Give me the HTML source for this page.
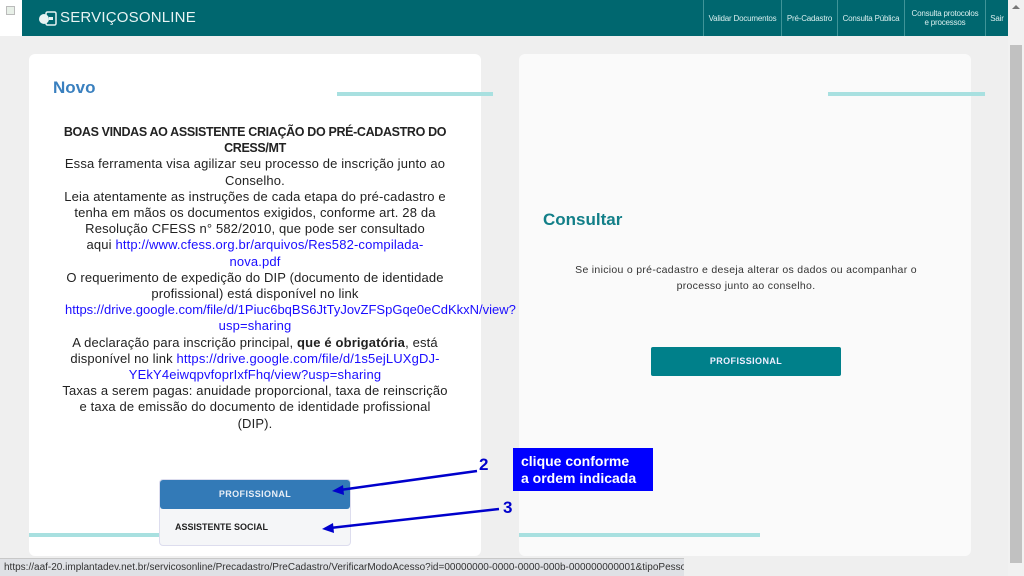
<!DOCTYPE html>
<html><head><meta charset="utf-8"><style>
*{margin:0;padding:0;box-sizing:border-box}
body{width:1024px;height:576px;overflow:hidden;background:#efefef;font-family:"Liberation Sans",sans-serif;position:relative}
.nav{position:absolute;left:22px;top:0;width:986px;height:36px;background:#00676f}
.brand{position:absolute;left:38px;top:9px;color:#e8f3f3;font-size:15px;letter-spacing:.2px}
.items{position:absolute;right:0;top:0;height:36px;display:flex}
.items div{border-left:1px solid #3f9498;color:#d8eeee;font-size:8px;display:flex;align-items:center;justify-content:center;text-align:center;line-height:9px;height:36px;white-space:nowrap;letter-spacing:-.2px}
.card{position:absolute;top:54px;height:502px;width:452px;border-radius:6px}
.ln{position:absolute;height:4px;background:#a8e0e0}
.txt{position:absolute;left:62px;top:124px;width:386px;text-align:center;font-size:13px;line-height:16.2px;color:#222;letter-spacing:.15px}
.txt a{color:#1a0dff;text-decoration:none}
</style></head><body>
<div style="position:absolute;left:0;top:0;width:22px;height:36px;background:#fff"></div>
<div style="position:absolute;left:6px;top:6px;width:9px;height:9px;border:1px solid #bbb;background:#e8f0e8"></div>
<div class="nav">
 <svg style="position:absolute;left:16px;top:9px" width="20" height="18" viewBox="0 0 20 18"><circle cx="6" cy="10" r="5" fill="#e8f3f3"/><rect x="8" y="3" width="10" height="13" rx="1.5" fill="none" stroke="#e8f3f3" stroke-width="1.5"/><rect x="11" y="8" width="4" height="3" fill="#e8f3f3"/></svg>
 <div class="brand">SERVIÇOSONLINE</div>
 <div class="items">
  <div style="width:78px">Validar Documentos</div>
  <div style="width:56px">Pré-Cadastro</div>
  <div style="width:67px">Consulta Pública</div>
  <div style="width:81px">Consulta protocolos<br>e processos</div>
  <div style="width:23px">Sair</div>
 </div>
</div>
<div style="position:absolute;left:1008px;top:0;width:16px;height:576px;background:#f1f1f1"></div>
<div style="position:absolute;left:1010px;top:45px;width:12px;height:518px;background:#c1c1c1"></div>
<div style="position:absolute;left:1012px;top:5px;width:0;height:0;border-left:4px solid transparent;border-right:4px solid transparent;border-bottom:4px solid #777"></div>

<div class="card" style="left:29px;background:#fff"></div>
<div class="card" style="left:519px;background:#fafafa"></div>
<div class="ln" style="left:337px;top:92px;width:156px"></div>
<div class="ln" style="left:828px;top:92px;width:157px"></div>
<div class="ln" style="left:29px;top:533px;width:140px"></div>
<div class="ln" style="left:519px;top:533px;width:241px"></div>

<div style="position:absolute;left:53px;top:78px;font-size:17px;font-weight:bold;color:#3a80bf">Novo</div>
<div class="txt"><b style="font-size:12.5px;letter-spacing:-.35px;display:block;margin:0 -16px">BOAS VINDAS AO ASSISTENTE CRIAÇÃO DO PRÉ-CADASTRO DO<br>CRESS/MT</b>Essa ferramenta visa agilizar seu processo de inscrição junto ao Conselho.<br>Leia atentamente as instruções de cada etapa do pré-cadastro e tenha em mãos os documentos exigidos, conforme art. 28 da Resolução CFESS n° 582/2010, que pode ser consultado<br>aqui <a>http://www.cfess.org.br/arquivos/Res582-compilada-<br>nova.pdf</a><br>O requerimento de expedição do DIP (documento de identidade profissional) está disponível no link<span style="display:block;text-align:left;white-space:nowrap;margin-left:3px;letter-spacing:0"><a>https://drive.google.com/file/d/1Piuc6bqBS6JtTyJovZFSpGqe0eCdKkxN/view?</a></span><a>usp=sharing</a><br>A declaração para inscrição principal, <b>que é obrigatória</b>, está disponível no link <a>https://drive.google.com/file/d/1s5ejLUXgDJ-YEkY4eiwqpvfoprIxfFhq/view?usp=sharing</a><br>Taxas a serem pagas: anuidade proporcional, taxa de reinscrição e taxa de emissão do documento de identidade profissional (DIP).</div>

<div style="position:absolute;left:159px;top:479px;width:192px;height:67px;border:1px solid #dde;border-radius:4px;background:#f5f6f8"></div>
<div style="position:absolute;left:160px;top:480px;width:190px;height:29px;background:#337ab7;border-radius:3px;color:#e8eef6;font-size:9px;font-weight:bold;text-align:center;line-height:29px;letter-spacing:.4px">PROFISSIONAL</div>
<div style="position:absolute;left:175px;top:522px;font-size:9px;font-weight:bold;color:#222">ASSISTENTE SOCIAL</div>

<div style="position:absolute;left:543px;top:210px;font-size:17px;font-weight:bold;color:#127f88">Consultar</div>
<div style="position:absolute;left:570px;top:262px;width:352px;text-align:center;font-size:10.5px;line-height:16px;color:#333;letter-spacing:.3px">Se iniciou o pré-cadastro e deseja alterar os dados ou acompanhar o processo junto ao conselho.</div>
<div style="position:absolute;left:651px;top:347px;width:190px;height:29px;background:#00808a;border-radius:2px;color:#eef;font-size:9px;font-weight:bold;text-align:center;line-height:29px;letter-spacing:.4px">PROFISSIONAL</div>

<div style="position:absolute;left:513px;top:448px;width:140px;height:43px;background:#0000ff;color:#fff;font-weight:bold;font-size:14px;line-height:17px;padding:5px 0 0 8px">clique conforme<br>a ordem indicada</div>
<div style="position:absolute;left:479px;top:455px;color:#0000cc;font-weight:bold;font-size:17px">2</div>
<div style="position:absolute;left:503px;top:498px;color:#0000cc;font-weight:bold;font-size:17px">3</div>
<svg style="position:absolute;left:0;top:0" width="1024" height="576">
<line x1="477" y1="471" x2="340" y2="490" stroke="#0000cc" stroke-width="2.5"/><path d="M332 491 L343 485 L344 495Z" fill="#0000cc"/>
<line x1="499" y1="509" x2="330" y2="528" stroke="#0000cc" stroke-width="2.5"/><path d="M322 529 L333 523 L334 533Z" fill="#0000cc"/>
</svg>
<div style="position:absolute;left:0;top:558px;width:684px;height:18px;background:#dfe1e5;border-top:1px solid #c8c8c8;font-size:10px;color:#333;line-height:17px;padding-left:4px;white-space:nowrap;overflow:hidden">https://aaf-20.implantadev.net.br/servicosonline/Precadastro/PreCadastro/VerificarModoAcesso?id=00000000-0000-0000-000b-000000000001&amp;tipoPessoa=pf</div>
</body></html>
